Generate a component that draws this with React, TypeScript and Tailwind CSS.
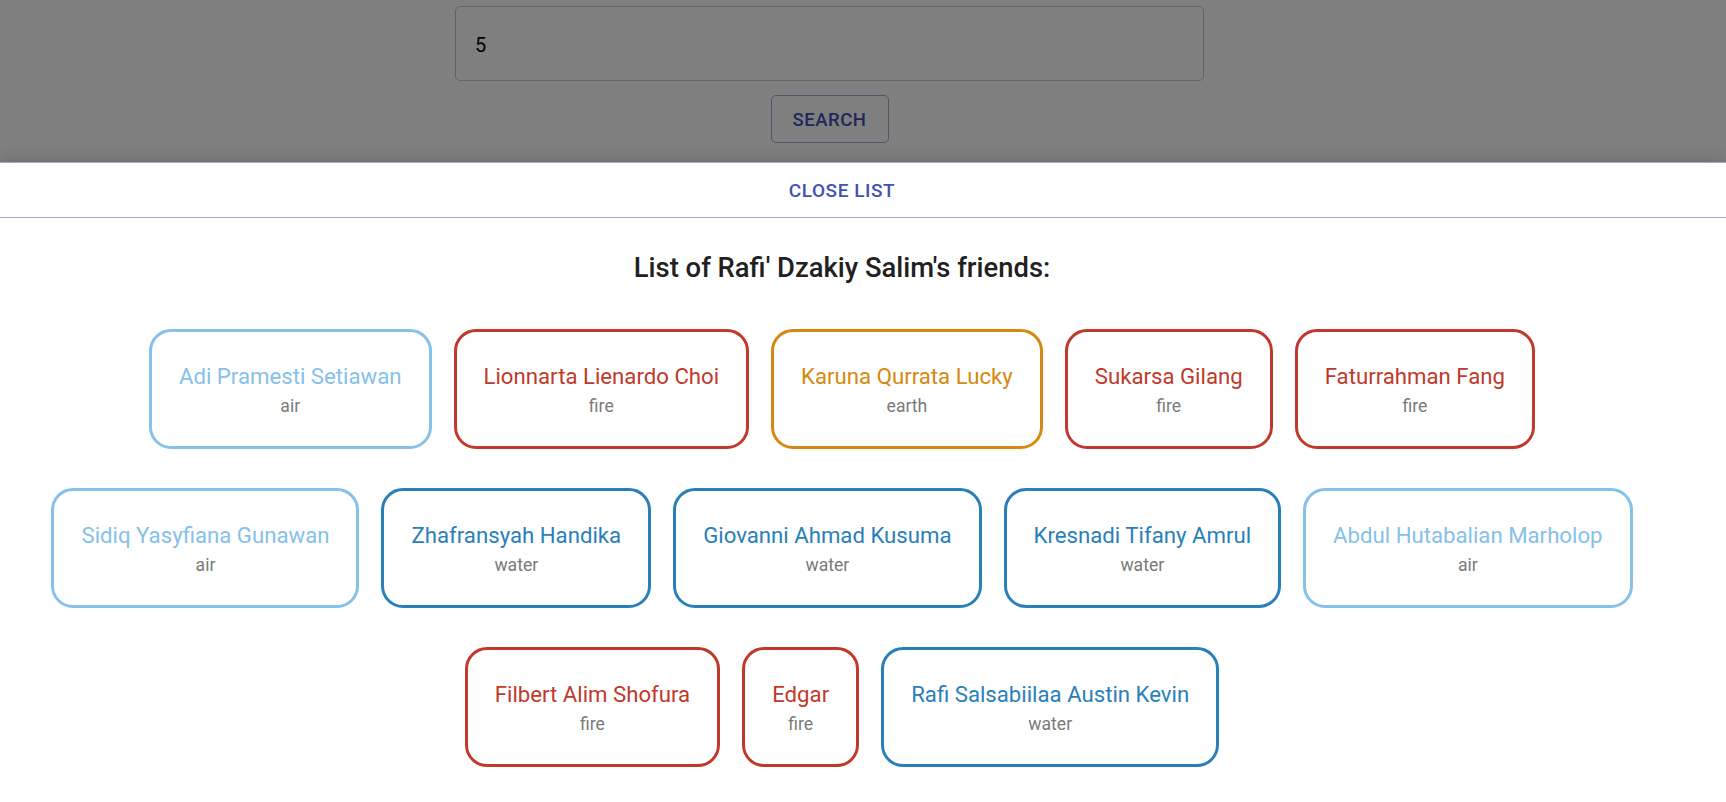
import React from "react";

type Friend = { name: string; element: "air" | "fire" | "earth" | "water" };

const friends: Friend[] = [
  { name: "Adi Pramesti Setiawan", element: "air" },
  { name: "Lionnarta Lienardo Choi", element: "fire" },
  { name: "Karuna Qurrata Lucky", element: "earth" },
  { name: "Sukarsa Gilang", element: "fire" },
  { name: "Faturrahman Fang", element: "fire" },
  { name: "Sidiq Yasyfiana Gunawan", element: "air" },
  { name: "Zhafransyah Handika", element: "water" },
  { name: "Giovanni Ahmad Kusuma", element: "water" },
  { name: "Kresnadi Tifany Amrul", element: "water" },
  { name: "Abdul Hutabalian Marholop", element: "air" },
  { name: "Filbert Alim Shofura", element: "fire" },
  { name: "Edgar", element: "fire" },
  { name: "Rafi Salsabiilaa Austin Kevin", element: "water" },
];

// element -> border + name colour
const elementStyle = {
  air: "border-[#85c1e9] text-[#85c1e9]",
  fire: "border-[#c0392b] text-[#c0392b]",
  earth: "border-[#d68910] text-[#d68910]",
  water: "border-[#2980b9] text-[#2980b9]",
};

function FriendCard({ friend }: { friend: Friend }) {
  return (
    <div className={`border-[3px] rounded-[22px] px-[27px] pt-7 pb-[27px] text-center bg-white ${elementStyle[friend.element]}`}>
      <div className="text-[22.2px] leading-[33px]">{friend.name}</div>
      <div className="text-[17.6px] leading-[26px] text-[#7a7a7a]">{friend.element}</div>
    </div>
  );
}

export default function App() {
  return (
    <div className="min-h-[802px] bg-white font-['Roboto','Liberation_Sans',sans-serif] overflow-hidden">
      {/* search page behind the drawer */}
      <div className="relative h-[162px]">
        <div className="flex flex-col items-center pt-[6px] pr-[67px]">
          <div className="w-[749px] h-[75px] border border-[#c4c4c4] rounded-[5px] flex items-center pl-[19px] pt-[2px] text-[20px] text-black">
            5
          </div>
          <button className="mt-[14px] w-[118px] h-[48px] pt-[3px] border border-[#9fa8da] rounded-[5px] text-[18.5px] font-medium tracking-[0.03em] text-[#3f51b5]">
            SEARCH
          </button>
        </div>
        {/* backdrop */}
        <div className="absolute inset-0 bg-black/50" />
      </div>

      {/* bottom drawer */}
      <div className="relative z-10 bg-white border-t border-[#9fa8da] shadow-[0_-4px_14px_rgba(0,0,0,0.12)] min-h-[640px]">
        <div className="h-[55px] pt-[3px] border-b border-[#9fa8da] flex items-center justify-center pr-[42px]">
          <button className="text-[19px] font-medium tracking-[0.03em] text-[#3f51b5]">CLOSE LIST</button>
        </div>
        <div className="pr-[42px]">
          <h2 className="pt-[30px] text-center text-[27.4px] leading-[40px] font-medium text-[#212121]">
            List of Rafi' Dzakiy Salim's friends:
          </h2>
          <div className="mt-[41px] flex flex-wrap justify-center gap-x-[22px] gap-y-[39px]">
            {friends.map((f) => (
              <FriendCard key={f.name} friend={f} />
            ))}
          </div>
        </div>
      </div>
    </div>
  );
}
